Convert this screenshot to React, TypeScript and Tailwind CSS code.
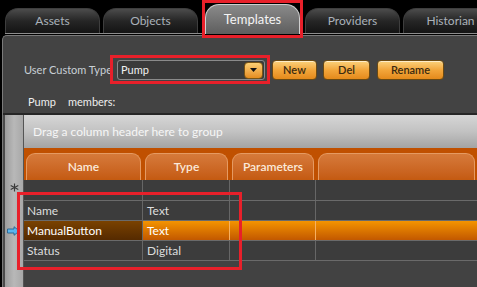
const font = { fontFamily: 'Lato, "Open Sans", "Liberation Sans", sans-serif' };

const tabs = [
  { label: 'Assets', ml: 'ml-[5px]', active: false },
  { label: 'Objects', ml: 'ml-[3px]', active: false },
  { label: 'Templates', ml: 'ml-[7px]', active: true },
  { label: 'Providers', ml: 'ml-[5px]', active: false },
  { label: 'Historian', ml: 'ml-[3px]', active: false },
];

const rows = [
  { name: 'Name', type: 'Text', selected: false },
  { name: 'ManualButton', type: 'Text', selected: true },
  { name: 'Status', type: 'Digital', selected: false },
];

function OrangeButton({ label, w }: { label: string; w: string }) {
  return (
    <div
      className={`${w} h-[20px] rounded-[4px] border border-[#6b4a12] bg-gradient-to-b from-[#fbd27a] via-[#f2a63a] to-[#e48a1a] flex items-center justify-center text-[11px] font-semibold text-[#3a2a10] shadow-[inset_0_1px_0_rgba(255,255,255,0.6)]`}
    >
      {label}
    </div>
  );
}

function HeaderCell({ label, w }: { label?: string; w: string }) {
  return (
    <div className={`${w} px-[2px] flex items-end`}>
      <div className="w-full h-[27px] rounded-t-[9px] border border-b-0 border-[#e59a62] bg-gradient-to-b from-[#d67a3a] to-[#c45a10] flex items-center justify-center text-[12px] font-semibold text-[#fbeadb]">
        {label}
      </div>
    </div>
  );
}

function Cell({ w, children, className = '' }: { w: string; children?: React.ReactNode; className?: string }) {
  return (
    <div className={`${w} h-full border-r border-[#666] flex items-center pl-[3px] whitespace-nowrap ${className}`}>
      {children}
    </div>
  );
}

export default function App() {
  return (
    <div className="relative w-[477px] h-[287px] bg-black overflow-hidden text-[#dcdcdc]" style={font}>
      {/* tabs */}
      <div className="h-[33px] flex items-end">
        {tabs.map((t) =>
          t.active ? (
            <div
              key={t.label}
              className={`${t.ml} w-[95px] h-[30px] shrink-0 rounded-t-[14px] border border-b-0 border-[#cfcfcf] bg-gradient-to-b from-[#8a8a8a] to-[#5e5e5e] flex items-center justify-center text-[13px] text-[#f4f4f4] relative top-[1px]`}
            >
              {t.label}
            </div>
          ) : (
            <div
              key={t.label}
              className={`${t.ml} w-[95px] h-[25px] shrink-0 rounded-t-[13px] border border-b-0 border-[#3e3e3e] bg-gradient-to-b from-[#4c4c4c] via-[#262626] to-[#141414] flex items-center justify-center text-[12px] text-[#aab2ba]`}
            >
              {t.label}
            </div>
          )
        )}
      </div>
      <div className="ml-[5px] h-[1px] bg-[#8c8c8c]" />
      <div className="h-[1px]" />

      {/* panel */}
      <div className="ml-[2px] h-[252px] rounded-tl-[5px] border-l border-t border-[#7a7a7a] bg-[#434343] flex flex-col">
        <div className="mt-[24px] ml-[21px] h-[20px] flex items-center">
          <span className="text-[11px] text-[#c9d0d6] w-[93px] whitespace-nowrap">User Custom Type</span>
          <div className="w-[148px] h-[20px] rounded-[3px] border border-[#8a8a8a] bg-[#3a3a3a] flex items-center justify-between pl-[3px] pr-[1px]">
            <span className="text-[11px] text-[#f0f0f0]">Pump</span>
            <div className="w-[19px] h-[17px] rounded-[4px] border border-[#7a5414] bg-gradient-to-b from-[#fbcf72] to-[#e58d1c] flex items-center justify-center">
              <svg width="7" height="4" viewBox="0 0 7 4">
                <path d="M0 0h7L3.5 4z" fill="#111" />
              </svg>
            </div>
          </div>
          <div className="ml-[7px]">
            <OrangeButton label="New" w="w-[45px]" />
          </div>
          <div className="ml-[6px]">
            <OrangeButton label="Del" w="w-[47px]" />
          </div>
          <div className="ml-[7px]">
            <OrangeButton label="Rename" w="w-[67px]" />
          </div>
        </div>

        <div className="mt-[15px] ml-[25px] h-[14px] flex items-center text-[11px] text-[#eeeeee]">
          <span className="w-[40px]">Pump</span>
          <span>members:</span>
        </div>

        {/* grid */}
        <div className="mt-[4px] border-t-2 border-[#262626] flex flex-1 min-h-0">
          <div className="w-[2px] bg-[#4a4a4a]" />
          {/* indicator column */}
          <div className="w-[19px] shrink-0 bg-gradient-to-r from-[#9c9c9c] via-[#b8b8b8] to-[#a8a8a8] border-r border-[#555] flex flex-col">
            <div className="h-[65px]" />
            <div className="h-[14px] flex items-center justify-center">
              <svg width="9" height="9" viewBox="0 0 10 10" stroke="#3a3a3a" strokeWidth="1.3">
                <path d="M5 0.5v9M0.8 2.8l8.4 4.4M0.8 7.2l8.4-4.4" />
              </svg>
            </div>
            <div className="h-[27px]" />
            <div className="h-[20px] flex items-center justify-start pl-[2px]">
              <svg width="13" height="10" viewBox="0 0 13 10">
                <path d="M0.5 3h6.5V0.7L12.3 5 7 9.3V7H0.5z" fill="#5ab6ee" stroke="#27628e" strokeWidth="0.9" />
              </svg>
            </div>
          </div>

          <div className="flex-1 flex flex-col">
            {/* group panel */}
            <div className="h-[33px] bg-gradient-to-b from-[#d6d6d6] via-[#c2c2c2] to-[#a4a4a4] flex items-center pl-[9px] text-[12px] text-[#f6f6f6] whitespace-nowrap">
              Drag a column header here to group
            </div>
            {/* header */}
            <div className="h-[32px] bg-[#c05000] flex">
              <HeaderCell label="Name" w="w-[119px]" />
              <HeaderCell label="Type" w="w-[87px]" />
              <HeaderCell label="Parameters" w="w-[86px]" />
              <HeaderCell w="flex-1" />
            </div>
            {/* new row */}
            <div className="h-[21px] flex bg-[#3c3c3c] border-b border-[#6a6a6a]">
              <Cell w="w-[119px]" />
              <Cell w="w-[87px]" />
              <Cell w="w-[86px]" />
            </div>
            {rows.map((r) => (
              <div
                key={r.name}
                className={`h-[20px] flex border-b text-[12px] ${
                  r.selected
                    ? 'border-[#6a6a6a] bg-gradient-to-b from-[#f49400] to-[#c25800] text-white'
                    : 'border-[#6a6a6a] bg-[#3c3c3c] text-[#dcdcdc]'
                }`}
              >
                <Cell
                  w="w-[119px]"
                  className={r.selected ? 'bg-gradient-to-b from-[#7a4200] to-[#552a00] border-[#8a6a4a]' : ''}
                >
                  {r.name}
                </Cell>
                <Cell w="w-[87px]" className={`pl-[4px] ${r.selected ? 'border-[#f7b060]' : ''}`}>
                  {r.type}
                </Cell>
                <Cell w="w-[86px]" className={r.selected ? 'border-[#f7b060]' : ''} />
              </div>
            ))}
            <div className="flex-1 bg-[#424242]" />
          </div>
        </div>
      </div>

      {/* annotation boxes */}
      <div className="absolute left-[202px] top-0 w-[101px] h-[38px] border-[3px] border-[#e8202a]" />
      <div className="absolute left-[110px] top-[55px] w-[160px] h-[29px] border-[3px] border-[#e8202a]" />
      <div className="absolute left-[17px] top-[192px] w-[225px] h-[78px] border-[3px] border-[#e8202a]" />
    </div>
  );
}
